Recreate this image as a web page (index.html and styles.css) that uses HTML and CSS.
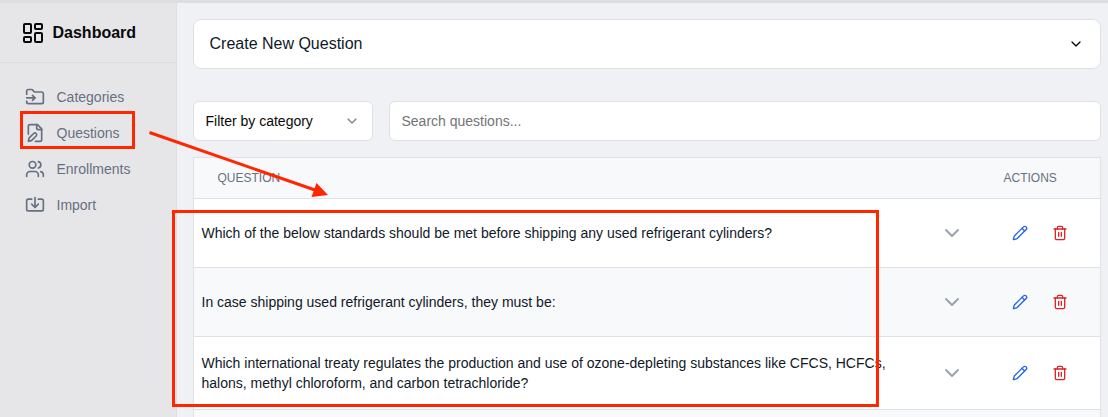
FILE: index.html
```html
<!DOCTYPE html>
<html lang="en">
<head>
<meta charset="utf-8">
<title>Questions</title>
<link rel="stylesheet" href="styles.css">
</head>
<body>
<svg class="sprite" aria-hidden="true">
  <symbol id="chevron" viewBox="0 0 24 24"><path d="m6 9 6 6 6-6"/></symbol>
  <symbol id="pencil" viewBox="0 0 24 24"><path d="M21.174 6.812a1 1 0 0 0-3.986-3.987L3.842 16.174a2 2 0 0 0-.5.83l-1.321 4.352a.5.5 0 0 0 .623.622l4.353-1.32a2 2 0 0 0 .83-.497z"/><path d="m15 5 4 4"/></symbol>
  <symbol id="trash" viewBox="0 0 24 24"><path d="M3 6h18"/><path d="M19 6v14c0 1-1 2-2 2H7c-1 0-2-1-2-2V6"/><path d="M8 6V4c0-1 1-2 2-2h4c1 0 2 1 2 2v2"/><path d="M10 11v6M14 11v6"/></symbol>
</svg>
<div class="app">
  <aside class="sidebar">
    <div class="brand">
      <svg class="icon icon-lg" viewBox="0 0 24 24"><rect x="3" y="3" width="7" height="9" rx="1"/><rect x="14" y="3" width="7" height="5" rx="1"/><rect x="14" y="12" width="7" height="9" rx="1"/><rect x="3" y="16" width="7" height="5" rx="1"/></svg>
      <span>Dashboard</span>
    </div>
    <nav class="nav">
      <a class="nav-item"><svg class="icon icon-md" viewBox="0 0 24 24"><path d="M2 9V5a2 2 0 0 1 2-2h3.900a2 2 0 0 1 1.690.900l.810 1.200a2 2 0 0 0 1.670.900H20a2 2 0 0 1 2 2v10a2 2 0 0 1-2 2H4a2 2 0 0 1-2-2v-1"/><path d="M2 13h10"/><path d="m9 16 3-3-3-3"/></svg>Categories</a>
      <a class="nav-item"><svg class="icon icon-md" viewBox="0 0 24 24"><path d="M12.500 22H18a2 2 0 0 0 2-2V7l-5-5H6a2 2 0 0 0-2 2v9.500"/><path d="M14 2v4a2 2 0 0 0 2 2h4"/><path d="M13.378 15.626a1 1 0 1 0-3.004-3.004l-5.010 5.012a2 2 0 0 0-.506.854l-.837 2.870a.5.5 0 0 0 .620.620l2.870-.837a2 2 0 0 0 .854-.506z"/></svg>Questions</a>
      <a class="nav-item"><svg class="icon icon-md" viewBox="0 0 24 24"><path d="M16 21v-2a4 4 0 0 0-4-4H6a4 4 0 0 0-4 4v2"/><circle cx="9" cy="7" r="4"/><path d="M22 21v-2a4 4 0 0 0-3-3.870"/><path d="M16 3.130a4 4 0 0 1 0 7.750"/></svg>Enrollments</a>
      <a class="nav-item"><svg class="icon icon-md" viewBox="0 0 24 24"><path d="M12 3v12"/><path d="m8 11 4 4 4-4"/><path d="M8 5H4a2 2 0 0 0-2 2v10a2 2 0 0 0 2 2h16a2 2 0 0 0 2-2V7a2 2 0 0 0-2-2h-4"/></svg>Import</a>
    </nav>
  </aside>
  <main class="content">
    <section class="create"><span>Create New Question</span><svg class="icon icon-sm"><use href="#chevron"/></svg></section>
    <div class="filters">
      <div class="select"><span>Filter by category</span><svg class="icon icon-sm faded"><use href="#chevron"/></svg></div>
      <div class="search">Search questions...</div>
    </div>
    <div class="table">
      <div class="row head"><div class="title">QUESTION</div><div></div><div class="actions-label">ACTIONS</div></div>
      <div class="row"><div class="question">Which of the below standards should be met before shipping any used refrigerant cylinders?</div><svg class="icon icon-lg expand"><use href="#chevron"/></svg><div class="actions"><svg class="icon icon-sm edit"><use href="#pencil"/></svg><svg class="icon icon-sm delete"><use href="#trash"/></svg></div></div>
      <div class="row alt"><div class="question">In case shipping used refrigerant cylinders, they must be:</div><svg class="icon icon-lg expand"><use href="#chevron"/></svg><div class="actions"><svg class="icon icon-sm edit"><use href="#pencil"/></svg><svg class="icon icon-sm delete"><use href="#trash"/></svg></div></div>
      <div class="row tall"><div class="question">Which international treaty regulates the production and use of ozone-depleting substances like CFCS, HCFCs, halons, methyl chloroform, and carbon tetrachloride?</div><svg class="icon icon-lg expand"><use href="#chevron"/></svg><div class="actions"><svg class="icon icon-sm edit"><use href="#pencil"/></svg><svg class="icon icon-sm delete"><use href="#trash"/></svg></div></div>
      <div class="row alt partial"></div>
    </div>
  </main>
</div>
<svg class="annotations" viewBox="0 0 1108 417">
  <rect x="21.500" y="112.500" width="112" height="35"/>
  <rect x="173.500" y="211.500" width="704" height="194"/>
  <path d="M149.500 132.500 315 190"/>
  <path class="arrowhead" d="M328 195 311.500 197 316.500 183z"/>
</svg>
</body>
</html>
```
FILE: styles.css
```css
* { box-sizing: border-box; }
body {
  margin: 0;
  height: 417px;
  overflow: hidden;
  font-family: "Liberation Sans", Arial, sans-serif;
  font-size: 14px;
  line-height: 20px;
  color: #111827;
  background: #f0f1f5;
}
.sprite { display: none; }
.app { display: flex; height: 417px; border-top: 3px solid #dedee0; }
.icon {
  flex: none;
  fill: none;
  stroke: currentColor;
  stroke-width: 2;
  stroke-linecap: round;
  stroke-linejoin: round;
}
.icon-sm { width: 16px; height: 16px; }
.icon-md { width: 20px; height: 20px; }
.icon-lg { width: 24px; height: 24px; }

.sidebar { flex: none; width: 177px; background: #e6e6e8; border-right: 1px solid #dfe0e3; }
.brand {
  display: flex;
  align-items: center;
  gap: 7.500px;
  height: 60px;
  padding-left: 21px;
  border-bottom: 1px solid #dcdde0;
  font-size: 16px;
  font-weight: bold;
  color: #09090b;
}
.nav { display: flex; flex-direction: column; padding: 16px 0 0 25px; }
.nav-item { display: flex; align-items: center; gap: 11.500px; height: 36px; color: #667080; }

.content { flex: 1; min-width: 0; padding: 16px 7px 0 16px; }
.create {
  display: flex;
  align-items: center;
  justify-content: space-between;
  height: 50px;
  padding: 0 16px 0 15.500px;
  border: 1px solid #e0e0e2;
  border-radius: 8px;
  background: #fff;
  font-size: 16px;
}
.create .icon { color: #09090b; }
.filters { display: flex; gap: 16px; margin-top: 32px; }
.select, .search {
  display: flex;
  align-items: center;
  height: 40px;
  padding: 0 12px 0 11.500px;
  border: 1px solid #e0e0e2;
  border-radius: 6px;
  background: #fff;
}
.select { width: 180px; justify-content: space-between; color: #09090b; }
.faded { opacity: .5; }
.search { flex: 1; color: #737377; }

.table { margin-top: 16px; border: 1px solid #dfe1e6; border-bottom: 0; }
.row {
  display: grid;
  grid-template-columns: 736px 44px 1fr;
  align-items: center;
  height: 69px;
  border-bottom: 1px solid #dfe1e6;
  background: #fff;
}
.row.head { height: 41px; background: #f8f9fb; font-size: 12px; color: #667080; }
.row.alt { background: #f8f9fb; }
.row.tall { height: 73px; }
.row.partial { height: 7px; border-bottom: 0; }
.title { padding-left: 23.500px; }
.actions-label { padding-left: 29.500px; }
.question { padding: 0 40px 0 7.500px; }
.expand { justify-self: start; margin-left: 10px; color: #9ca3af; }
.actions { display: flex; gap: 24px; padding-left: 38px; }
.edit { color: #2563eb; }
.delete { color: #dc2626; }

.annotations {
  position: absolute;
  left: 0;
  top: 0;
  width: 1108px;
  height: 417px;
  fill: none;
  stroke: #ff2600;
  stroke-width: 3;
  pointer-events: none;
}
.arrowhead { fill: #ff2600; stroke: none; }
```
